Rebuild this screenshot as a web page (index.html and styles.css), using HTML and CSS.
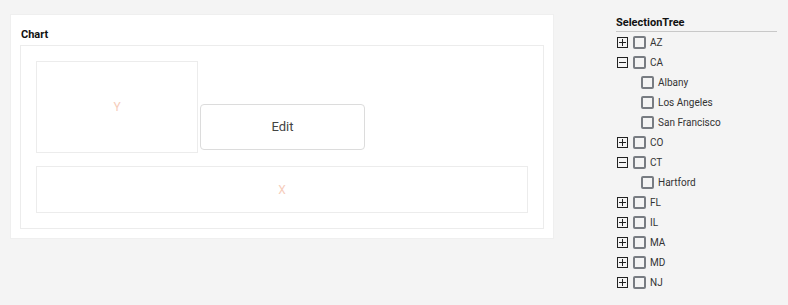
FILE: index.html
```html
<!DOCTYPE html>
<html lang="en">
<head>
    <meta charset="UTF-8">
    <title>Chart - SelectionTree</title>
    <link rel="stylesheet" href="styles.css">
</head>
<body>
    <div class="page">
        <div class="panel">
            <div class="panel-title">Chart</div>
            <div class="chart">
                <div class="chart-top">
                    <div class="axis axis-y">Y</div>
                    <button class="edit-btn">Edit</button>
                </div>
                <div class="axis axis-x">X</div>
            </div>
        </div>

        <div class="tree">
            <div class="tree-title">SelectionTree</div>
            <ul class="tree-list">
                <li class="node"><span class="toggle plus"></span><span class="check"></span><span class="label">AZ</span></li>
                <li class="node"><span class="toggle minus"></span><span class="check"></span><span class="label">CA</span></li>
                <li class="node child"><span class="check"></span><span class="label">Albany</span></li>
                <li class="node child"><span class="check"></span><span class="label">Los Angeles</span></li>
                <li class="node child"><span class="check"></span><span class="label">San Francisco</span></li>
                <li class="node"><span class="toggle plus"></span><span class="check"></span><span class="label">CO</span></li>
                <li class="node"><span class="toggle minus"></span><span class="check"></span><span class="label">CT</span></li>
                <li class="node child"><span class="check"></span><span class="label">Hartford</span></li>
                <li class="node"><span class="toggle plus"></span><span class="check"></span><span class="label">FL</span></li>
                <li class="node"><span class="toggle plus"></span><span class="check"></span><span class="label">IL</span></li>
                <li class="node"><span class="toggle plus"></span><span class="check"></span><span class="label">MA</span></li>
                <li class="node"><span class="toggle plus"></span><span class="check"></span><span class="label">MD</span></li>
                <li class="node"><span class="toggle plus"></span><span class="check"></span><span class="label">NJ</span></li>
            </ul>
        </div>
    </div>
</body>
</html>
```

FILE: styles.css
```css
body {
    margin: 0;
    padding: 0;
    background: #f4f4f4;
    font-family: Roboto, "Liberation Sans", sans-serif;
    color: #333333;
}

.page {
    display: flex;
    align-items: flex-start;
    padding: 14px 0 0 10px;
}

.panel {
    width: 544px;
    height: 225px;
    box-sizing: border-box;
    background: #ffffff;
    border: 1px solid #efefef;
    padding: 13px 9px 0 9px;
}

.panel-title {
    font-size: 11px;
    font-weight: bold;
    color: #111111;
    line-height: 13px;
    padding-left: 1px;
    margin-bottom: 4px;
}

.chart {
    height: 184px;
    box-sizing: border-box;
    border: 1px solid #ececec;
    padding: 15px;
}

.chart-top {
    display: flex;
    align-items: flex-end;
    gap: 2px;
    margin-bottom: 13px;
}

.axis {
    display: flex;
    align-items: center;
    justify-content: center;
    box-sizing: border-box;
    border: 1px solid #ececec;
    color: #f6cdbb;
    font-size: 12px;
}

.axis-y {
    width: 162px;
    height: 92px;
}

.axis-x {
    width: 492px;
    height: 47px;
}

.edit-btn {
    width: 165px;
    height: 46px;
    margin-bottom: 3px;
    background: #ffffff;
    border: 1px solid #dcdcdc;
    border-radius: 4px;
    font-family: Roboto, "Liberation Sans", sans-serif;
    font-size: 13px;
    color: #444444;
    padding: 0 0 2px 0;
}

.tree {
    width: 161px;
    margin-left: 62px;
    padding-top: 2px;
}

.tree-title {
    font-size: 11px;
    font-weight: bold;
    color: #111111;
    line-height: 14px;
    padding: 0 0 1px 0;
    border-bottom: 1px solid #c8c8c8;
}

.tree-list {
    list-style: none;
    margin: 0;
    padding: 0;
}

.node {
    display: flex;
    align-items: center;
    height: 20px;
    font-size: 10px;
    color: #333333;
}

.node.child {
    padding-left: 25px;
}

.toggle {
    position: relative;
    width: 9px;
    height: 9px;
    border: 1px solid #222222;
    margin-left: 1px;
    margin-right: 5px;
}

.toggle::before,
.toggle.plus::after {
    content: "";
    position: absolute;
    background: #222222;
}

.toggle::before {
    left: 1px;
    top: 4px;
    width: 7px;
    height: 1px;
}

.toggle.plus::after {
    left: 4px;
    top: 1px;
    width: 1px;
    height: 7px;
}

.check {
    width: 9px;
    height: 9px;
    border: 2px solid #787c82;
    border-radius: 2px;
    margin-right: 4px;
}
```
